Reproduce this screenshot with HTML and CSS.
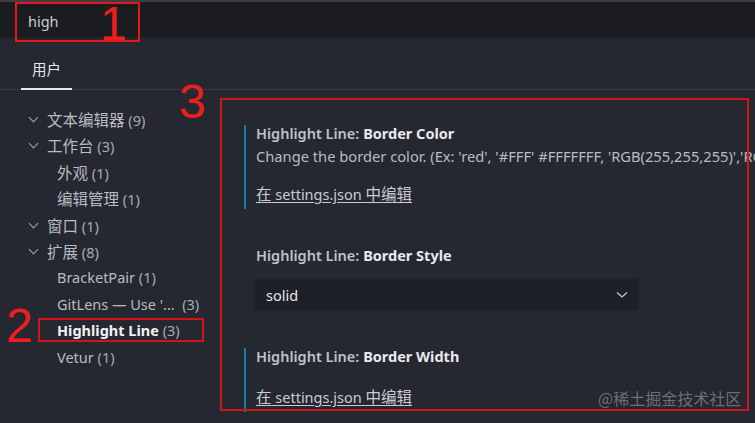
FILE: index.html
```html
<!DOCTYPE html>
<html lang="zh-CN">
<head>
    <meta charset="UTF-8">
    <title>设置 - high</title>
    <link rel="stylesheet" href="styles.css">
</head>
<body>
    <div class="window">
        <div class="top-strip"></div>
        <div class="search-bar">
            <span class="search-text">high</span>
        </div>

        <div class="tabs">
            <div class="tab active"><span class="zh">用户</span></div>
        </div>

        <div class="main">
            <ul class="tree">
                <li class="node"><span class="chev"></span><span class="zh">文本编辑器</span> <span class="count">(9)</span></li>
                <li class="node"><span class="chev"></span><span class="zh">工作台</span> <span class="count">(3)</span></li>
                <li class="node sub"><span class="zh">外观</span> <span class="count">(1)</span></li>
                <li class="node sub"><span class="zh">编辑管理</span> <span class="count">(1)</span></li>
                <li class="node"><span class="chev"></span><span class="zh">窗口</span> <span class="count">(1)</span></li>
                <li class="node"><span class="chev"></span><span class="zh">扩展</span> <span class="count">(8)</span></li>
                <li class="node sub">BracketPair <span class="count">(1)</span></li>
                <li class="node sub">GitLens — Use '...  <span class="count">(3)</span></li>
                <li class="node sub selected"><b>Highlight Line</b> <span class="count">(3)</span></li>
                <li class="node sub">Vetur <span class="count">(1)</span></li>
            </ul>

            <div class="settings">
                <div class="setting modified">
                    <div class="title">Highlight Line: <b>Border Color</b></div>
                    <div class="desc">Change the border color. (Ex: 'red', '#FFF' #FFFFFFF, 'RGB(255,255,255)','RGB(255, 255, 255. 0.5) )</div>
                    <a class="edit-link" href="#"><span class="zh">在</span> settings.json <span class="zh">中编辑</span></a>
                </div>

                <div class="setting">
                    <div class="title">Highlight Line: <b>Border Style</b></div>
                    <div class="select">
                        <span>solid</span>
                        <svg class="select-chev" width="12" height="8" viewBox="0 0 12 8"><path d="M1 1.5 L6 6 L11 1.5" fill="none" stroke="#c5c8ce" stroke-width="1.3"/></svg>
                    </div>
                </div>

                <div class="setting modified last">
                    <div class="title">Highlight Line: <b>Border Width</b></div>
                    <a class="edit-link" href="#"><span class="zh">在</span> settings.json <span class="zh">中编辑</span></a>
                </div>
            </div>
        </div>

        <div class="watermark">@稀土掘金技术社区</div>

        <!-- red annotations drawn over the screenshot -->
        <div class="mark box1"></div>
        <div class="mark num num1">1</div>
        <div class="mark box2"></div>
        <div class="mark num num2">2</div>
        <div class="mark box3"></div>
        <div class="mark num num3">3</div>
    </div>
</body>
</html>
```

FILE: styles.css
```css
* {
    box-sizing: border-box;
}

body {
    margin: 0;
    background-color: #252731;
    font-family: 'Noto Sans', 'Noto Sans CJK SC', sans-serif;
    font-size: 14.5px;
    color: #b9bcc3;
}

.zh {
    font-family: 'Noto Sans CJK SC', sans-serif;
    font-size: 15.5px;
}

.window {
    position: relative;
    width: 755px;
    height: 423px;
    overflow: hidden;
    background-color: #252731;
}

.top-strip {
    height: 2px;
    background-color: #3b3e46;
}

.search-bar {
    height: 36px;
    background-color: #1b1c20;
    display: flex;
    align-items: center;
    padding: 3px 0 0 28px;
    border-bottom: 1px solid #202126;
}

.search-text {
    color: #c9ccd2;
}

.tabs {
    height: 52px;
    display: flex;
    align-items: flex-end;
    padding-left: 21px;
    border-bottom: 1px solid #3b3d46;
}

.tab {
    width: 51px;
    text-align: center;
    padding-bottom: 9px;
    color: #e4e6ea;
}

.tab .zh {
    font-size: 14.5px;
}

.tab.active {
    border-bottom: 2px solid #e8e8e8;
    margin-bottom: -1px;
}

.main {
    display: flex;
}

.tree {
    list-style: none;
    margin: 0;
    padding: 16px 0 0 28px;
    width: 220px;
}

.node {
    height: 26.4px;
    line-height: 26px;
    white-space: pre;
    color: #b9bcc3;
}

.node.sub {
    padding-left: 29px;
}

.node .count {
    color: #a8abb2;
}

.node.selected b {
    color: #f0f1f3;
    font-weight: 700;
}

.chev {
    display: inline-block;
    width: 19px;
    height: 10px;
    position: relative;
}

.chev::before {
    content: "";
    position: absolute;
    left: 2px;
    top: -2px;
    width: 6px;
    height: 6px;
    border-right: 1.3px solid #a3a6ad;
    border-bottom: 1.3px solid #a3a6ad;
    transform: rotate(45deg);
}

.settings {
    flex: 1;
    padding: 35px 0 0 24px;
    min-width: 0;
}

.setting {
    border-left: 2px solid transparent;
    padding-left: 10px;
    margin-bottom: 38px;
}

.setting.modified {
    border-left-color: #127ea8;
}

.setting .title {
    color: #bfc2c8;
    font-weight: 600;
    line-height: 17px;
}

.setting .title b {
    color: #e8e9ec;
    font-weight: 700;
}

.desc {
    white-space: nowrap;
    margin-top: 2px;
    line-height: 24px;
    font-size: 14.7px;
    color: #b9bcc3;
}

.edit-link {
    display: inline-block;
    margin-top: 15px;
    margin-bottom: 5px;
    line-height: 20px;
    color: #c9ccd2;
    text-decoration: underline;
    text-underline-offset: 2px;
}

.select {
    margin: 15px 0 0 -2px;
    width: 384px;
    height: 31px;
    background-color: #1e2027;
    display: flex;
    align-items: center;
    justify-content: space-between;
    padding: 0 10px 0 12px;
    color: #e6e7ea;
}

.setting.last .edit-link {
    margin-top: 21px;
}

.watermark {
    position: absolute;
    left: 598px;
    top: 386px;
    color: rgba(200, 202, 208, 0.45);
    font-family: 'Noto Sans CJK SC', sans-serif;
    font-size: 16px;
}

.mark {
    position: absolute;
}

.box1 {
    left: 15px;
    top: 2px;
    width: 125px;
    height: 40px;
    border: 2px solid #e5171b;
}

.box2 {
    left: 38px;
    top: 318px;
    width: 166px;
    height: 24px;
    border: 2px solid #d3141a;
}

.box3 {
    left: 220px;
    top: 98px;
    width: 529px;
    height: 313px;
    border: 2px solid #d3141a;
}

.num {
    color: #f01d1d;
    font-family: 'Liberation Sans', sans-serif;
    font-size: 48px;
    line-height: 1;
}

.num1 {
    left: 100px;
    top: 0;
}

.num2 {
    left: 6px;
    top: 302px;
}

.num3 {
    left: 179px;
    top: 78px;
}
```
